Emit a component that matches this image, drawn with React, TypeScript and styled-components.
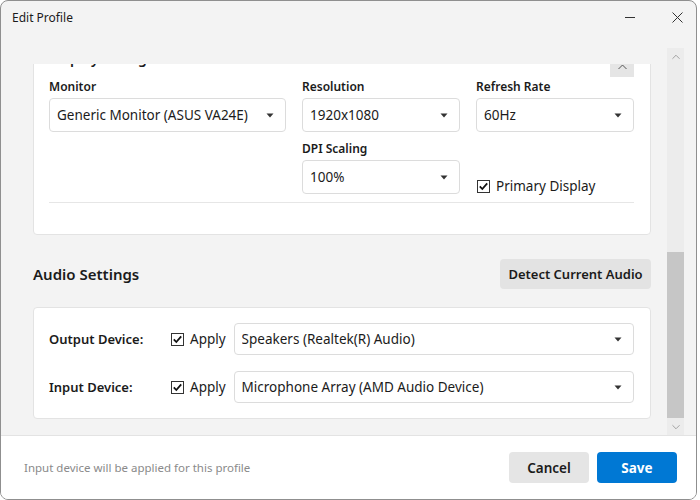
import React from "react";
import styled, { createGlobalStyle } from "styled-components";

const GlobalStyle = createGlobalStyle`
  html, body { margin: 0; padding: 0; background: #ffffff; }
  body { font-family: "Noto Sans", "Segoe UI", sans-serif; color: #1b1b1b; }
  * { box-sizing: border-box; }
`;

const Window = styled.div`
  width: 697px;
  height: 500px;
  border: 1px solid #8f8f8f;
  border-radius: 8px;
  background: #f3f3f3;
  overflow: hidden;
  display: flex;
  flex-direction: column;
`;

const TitleBar = styled.div`
  height: 32px;
  flex: none;
  display: flex;
  align-items: center;
  padding: 0 12px 0 11px;
  font-size: 12px;
  color: #1b1b1b;
`;

const TitleText = styled.div`
  flex: 1;
`;

const CaptionButtons = styled.div`
  display: flex;
  align-items: center;
  gap: 37px;
  margin-right: 1px;
`;

const Body = styled.div`
  flex: 1;
  min-height: 0;
  display: flex;
  padding-top: 15px;
`;

const ScrollArea = styled.div`
  flex: 1;
  min-width: 0;
  display: flex;
  flex-direction: column;
  padding-top: 16px;
`;

const Viewport = styled.div`
  flex: 1;
  min-height: 0;
  overflow: hidden;
`;

const Content = styled.div<{ $offset: number }>`
  margin-top: ${(p) => -p.$offset}px;
  padding: 16px 0 16px 32px;
  display: flex;
  flex-direction: column;
`;

const ScrollBar = styled.div`
  width: 17px;
  margin: 0 12px 0 16px;
  background: #ececec;
  display: flex;
  flex-direction: column;
  align-items: center;
`;

const ScrollArrow = styled.div`
  height: 17px;
  width: 17px;
  display: flex;
  align-items: center;
  justify-content: center;
  flex: none;
`;

const ScrollTrack = styled.div`
  flex: 1;
  width: 100%;
  display: flex;
  flex-direction: column;
  justify-content: flex-end;
`;

const ScrollThumb = styled.div`
  height: 166px;
  width: 100%;
  background: #c6c6c6;
`;

const Card = styled.div`
  background: #ffffff;
  border: 1px solid #e3e3e3;
  border-radius: 4px;
  padding: 15px 16px 15px 15px;
`;

const CardHeader = styled.div`
  height: 28px;
  display: flex;
  justify-content: space-between;
`;

const CardTitle = styled.div`
  font-size: 14px;
  font-weight: 600;
  line-height: 20px;
  align-self: flex-start;
`;

const CollapseButton = styled.div`
  width: 24px;
  height: 20px;
  background: #e5e5e5;
  align-self: flex-end;
  display: flex;
  align-items: center;
  justify-content: center;
`;

const DisplayGrid = styled.div`
  display: grid;
  grid-template-columns: 1.5fr 1fr 1fr;
  column-gap: 16px;
  row-gap: 9px;
  margin-top: 2px;
`;

const Field = styled.div<{ $col?: number }>`
  display: flex;
  flex-direction: column;
  ${(p) => (p.$col ? `grid-column: ${p.$col};` : "")}
`;

const FieldLabel = styled.div`
  font-size: 12px;
  font-weight: 600;
  line-height: 16px;
  margin-bottom: 3px;
`;

const Select = styled.div<{ $h: number; $grow?: boolean }>`
  height: ${(p) => p.$h}px;
  background: #ffffff;
  border: 1px solid #dcdcdc;
  border-radius: 4px;
  display: flex;
  align-items: center;
  padding: 0 11px 0 7px;
  font-size: 13.5px;
  color: #1b1b1b;
  flex: ${(p) => (p.$grow ? "1 1 auto" : "none")};
  min-width: 0;
`;

const SelectText = styled.span`
  flex: 1;
  white-space: nowrap;
  overflow: hidden;
`;

const CheckCell = styled.label`
  align-self: end;
  display: flex;
  align-items: center;
  gap: 6px;
  font-size: 13.5px;
  height: 18px;
  margin-bottom: -1px;
  padding-left: 1px;
`;

const Separator = styled.div`
  height: 1px;
  background: #e6e6e6;
  margin: 8px 0 16px;
`;

const SectionHeader = styled.div`
  margin-top: 24px;
  height: 30px;
  display: flex;
  align-items: center;
  justify-content: space-between;
`;

const SectionTitle = styled.div`
  font-size: 15px;
  font-weight: 600;
`;

const GrayButton = styled.div<{ $w: number }>`
  width: ${(p) => p.$w}px;
  height: 30px;
  border-radius: 4px;
  background: #e3e3e3;
  display: flex;
  align-items: center;
  justify-content: center;
  font-size: 13px;
  font-weight: 600;
  color: #1b1b1b;
`;

const AudioCard = styled(Card)`
  margin-top: 18px;
  display: flex;
  flex-direction: column;
  gap: 16px;
`;

const AudioRow = styled.div`
  display: flex;
  align-items: center;
`;

const RowLabel = styled.div`
  width: 122px;
  font-size: 13px;
  font-weight: 600;
`;

const ApplyCheck = styled.label`
  display: flex;
  align-items: center;
  gap: 6px;
  font-size: 13.5px;
  margin-right: 8px;
`;

const Footer = styled.div`
  height: 64px;
  flex: none;
  background: #ffffff;
  border-top: 1px solid #e3e3e3;
  display: flex;
  align-items: center;
  padding: 0 19px 0 23px;
`;

const FooterNote = styled.div`
  flex: 1;
  font-size: 11.5px;
  color: #8a8a8a;
`;

const FooterButtons = styled.div`
  display: flex;
  gap: 8px;
`;

const FooterButton = styled.div<{ $primary?: boolean }>`
  width: 80px;
  height: 31px;
  border-radius: 4px;
  display: flex;
  align-items: center;
  justify-content: center;
  font-size: 13.5px;
  font-weight: ${(p) => (p.$primary ? 700 : 600)};
  background: ${(p) => (p.$primary ? "#0078d4" : "#e5e5e5")};
  color: ${(p) => (p.$primary ? "#ffffff" : "#1b1b1b")};
`;

const Caret = () => (
  <svg width="8" height="5" viewBox="0 0 8 5">
    <path d="M0.5 0.5 H7.5 L4 4.5 Z" fill="#333" />
  </svg>
);

const Chevron = ({ up, color, w = 9 }: { up?: boolean; color: string; w?: number }) => (
  <svg width={w} height="6" viewBox="0 0 9 6">
    <path
      d={up ? "M0.5 5 L4.5 1 L8.5 5" : "M0.5 1 L4.5 5 L8.5 1"}
      fill="none"
      stroke={color}
      strokeWidth="1"
    />
  </svg>
);

const CheckBox = () => (
  <svg width="13" height="13" viewBox="0 0 13 13">
    <rect x="0.5" y="0.5" width="12" height="12" fill="#fff" stroke="#333" />
    <path d="M2.8 6.4 L5.3 9 L10.2 3.4" fill="none" stroke="#111" strokeWidth="1.8" />
  </svg>
);

const SelectBox = ({ value, h, grow }: { value: string; h: number; grow?: boolean }) => (
  <Select $h={h} $grow={grow}>
    <SelectText>{value}</SelectText>
    <Caret />
  </Select>
);

export default function App() {
  return (
    <>
      <GlobalStyle />
      <Window>
        <TitleBar>
          <TitleText>Edit Profile</TitleText>
          <CaptionButtons>
            <svg width="10" height="10" viewBox="0 0 10 10">
              <path d="M0 5.5 H10" stroke="#333" strokeWidth="1" />
            </svg>
            <svg width="11" height="11" viewBox="0 0 11 11">
              <path d="M0.5 0.5 L10.5 10.5 M10.5 0.5 L0.5 10.5" stroke="#333" strokeWidth="1" />
            </svg>
          </CaptionButtons>
        </TitleBar>
        <Body>
          <ScrollArea>
            <Viewport>
              <Content $offset={47}>
                <Card>
                  <CardHeader>
                    <CardTitle>Display Configuration</CardTitle>
                    <CollapseButton>
                      <Chevron up color="#555" />
                    </CollapseButton>
                  </CardHeader>
                  <DisplayGrid>
                    <Field>
                      <FieldLabel>Monitor</FieldLabel>
                      <SelectBox h={34} value="Generic Monitor (ASUS VA24E)" />
                    </Field>
                    <Field>
                      <FieldLabel>Resolution</FieldLabel>
                      <SelectBox h={34} value="1920x1080" />
                    </Field>
                    <Field>
                      <FieldLabel>Refresh Rate</FieldLabel>
                      <SelectBox h={34} value="60Hz" />
                    </Field>
                    <Field $col={2}>
                      <FieldLabel>DPI Scaling</FieldLabel>
                      <SelectBox h={34} value="100%" />
                    </Field>
                    <CheckCell>
                      <CheckBox />
                      Primary Display
                    </CheckCell>
                  </DisplayGrid>
                  <Separator />
                </Card>
                <SectionHeader>
                  <SectionTitle>Audio Settings</SectionTitle>
                  <GrayButton $w={151}>Detect Current Audio</GrayButton>
                </SectionHeader>
                <AudioCard>
                  <AudioRow>
                    <RowLabel>Output Device:</RowLabel>
                    <ApplyCheck>
                      <CheckBox />
                      Apply
                    </ApplyCheck>
                    <SelectBox grow h={32} value="Speakers (Realtek(R) Audio)" />
                  </AudioRow>
                  <AudioRow>
                    <RowLabel>Input Device:</RowLabel>
                    <ApplyCheck>
                      <CheckBox />
                      Apply
                    </ApplyCheck>
                    <SelectBox grow h={32} value="Microphone Array (AMD Audio Device)" />
                  </AudioRow>
                </AudioCard>
              </Content>
            </Viewport>
          </ScrollArea>
          <ScrollBar>
            <ScrollArrow>
              <Chevron up color="#9a9a9a" w={8} />
            </ScrollArrow>
            <ScrollTrack>
              <ScrollThumb />
            </ScrollTrack>
            <ScrollArrow>
              <Chevron color="#9a9a9a" w={8} />
            </ScrollArrow>
          </ScrollBar>
        </Body>
        <Footer>
          <FooterNote>Input device will be applied for this profile</FooterNote>
          <FooterButtons>
            <FooterButton>Cancel</FooterButton>
            <FooterButton $primary>Save</FooterButton>
          </FooterButtons>
        </Footer>
      </Window>
    </>
  );
}
